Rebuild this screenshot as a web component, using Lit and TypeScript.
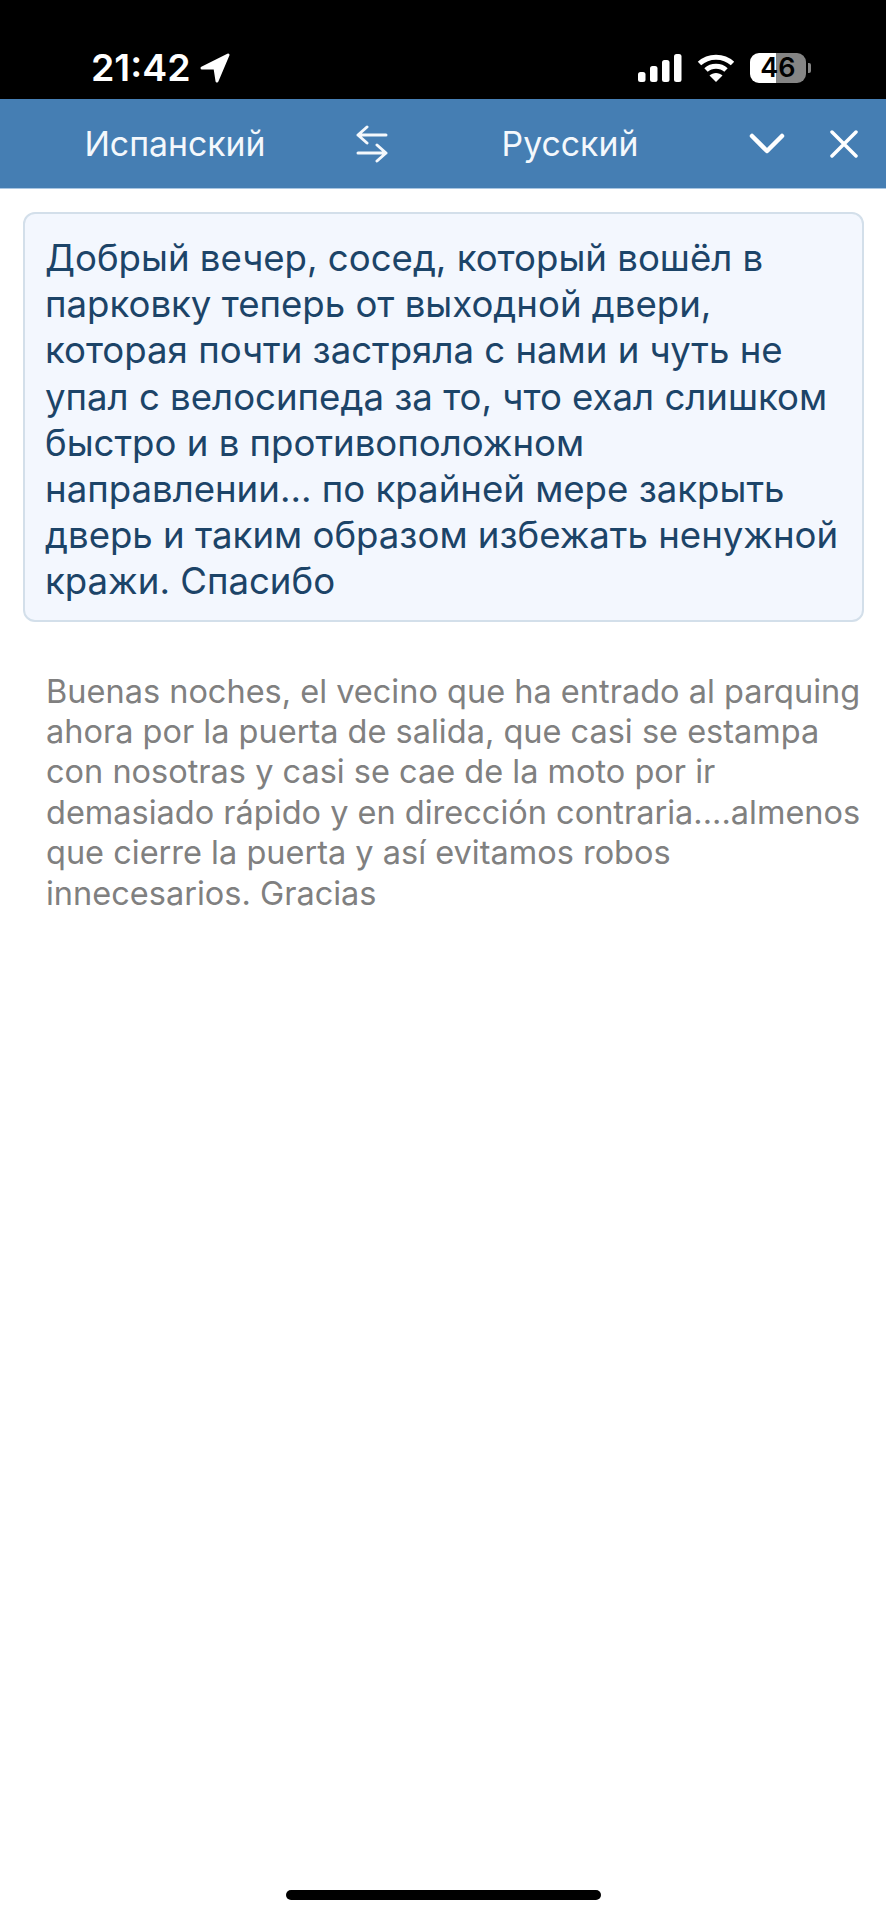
import { LitElement, html, css } from 'lit';
import { customElement } from 'lit/decorators.js';

const RU_LINES = [
  'Добрый вечер, сосед, который вошёл в',
  'парковку теперь от выходной двери,',
  'которая почти застряла с нами и чуть не',
  'упал с велосипеда за то, что ехал слишком',
  'быстро и в противоположном',
  'направлении... по крайней мере закрыть',
  'дверь и таким образом избежать ненужной',
  'кражи. Спасибо',
];

const ES_LINES = [
  'Buenas noches, el vecino que ha entrado al parquing',
  'ahora por la puerta de salida, que casi se estampa',
  'con nosotras y casi se cae de la moto por ir',
  'demasiado rápido y en dirección contraria....almenos',
  'que cierre la puerta y así evitamos robos',
  'innecesarios. Gracias',
];

@customElement('app-root')
export class AppRoot extends LitElement {
  static styles = css`
    :host {
      display: block;
      font-family: Inter, "Liberation Sans", sans-serif;
    }
    .page {
      display: flex;
      flex-direction: column;
      height: 1920px;
      background: #fff;
      overflow: hidden;
    }
    .status {
      display: flex;
      align-items: flex-start;
      justify-content: space-between;
      height: 99px;
      box-sizing: border-box;
      padding: 46px 75px 0 91px;
      background: #000;
      color: #fff;
    }
    .clock {
      display: flex;
      align-items: center;
      gap: 9px;
      font-size: 37.5px;
      line-height: 44px;
      font-weight: 600;
    }
    .indicators {
      display: flex;
      align-items: center;
      gap: 15px;
      height: 44px;
    }
    .battery {
      display: flex;
      align-items: center;
      gap: 2px;
    }
    .battery-body {
      width: 56px;
      height: 30px;
      border-radius: 9px;
      background: linear-gradient(90deg, #fff 0 47%, #858585 47% 100%);
      color: #000;
      font-size: 27px;
      line-height: 30px;
      font-weight: 600;
      text-align: center;
    }
    .battery-cap {
      width: 3px;
      height: 10px;
      border-radius: 0 2px 2px 0;
      background: #858585;
    }
    .bar {
      display: flex;
      align-items: center;
      height: 90px;
      box-sizing: border-box;
      background: #457eb3;
      border-bottom: 1px solid #a9c6e2;
      color: #f4f8fc;
      font-size: 33.8px;
      font-weight: 400;
    }
    .lang {
      flex: none;
      text-align: center;
    }
    .lang-from { width: 350px; }
    .lang-to { width: 212px; margin-left: 92px; }
    .swap { margin-left: 22px; width: 0; display: flex; justify-content: center; }
    svg { display: block; flex: none; }
    .chevron { margin-left: 73px; }
    .close { margin-left: 45px; }
    .content {
      display: flex;
      flex-direction: column;
      padding: 23px 22px 0 23px;
    }
    .source {
      padding: 21px 20px 15px 20px;
      border: 2px solid #d3dfea;
      border-radius: 12px;
      background: #f3f7fe;
      color: #1c4468;
      font-size: 36.6px;
      line-height: 46.2px;
    }
    .original {
      padding: 50px 0 0 23px;
      color: #808080;
      font-size: 32.5px;
      line-height: 40.4px;
    }
    .line { white-space: nowrap; }
    .home {
      display: flex;
      justify-content: center;
      margin-top: auto;
      padding-bottom: 20px;
    }
    .home-bar {
      width: 315px;
      height: 10px;
      border-radius: 5px;
      background: #000;
    }
  `;

  render() {
    return html`
      <div class="page">
        <div class="status">
          <div class="clock">
            21:42
            <svg width="30" height="30" viewBox="0 0 30 30">
              <path fill="#fff" stroke="#fff" stroke-width="3" stroke-linejoin="round"
                d="M2 15 L28 2 L17 28 L15 15 Z"/>
            </svg>
          </div>
          <div class="indicators">
            <svg width="44" height="28" viewBox="0 0 44 28" fill="#fff">
              <rect x="0" y="18" width="7.5" height="10" rx="2.5"/>
              <rect x="12" y="12" width="7.5" height="16" rx="2.5"/>
              <rect x="24" y="6" width="7.5" height="22" rx="2.5"/>
              <rect x="36" y="0" width="7.5" height="28" rx="2.5"/>
            </svg>
            <svg width="38" height="28" viewBox="0 0 38 28">
              <path fill="none" stroke="#fff" stroke-width="5" d="M2.5 9.5 C11.5 1 26.5 1 35.5 9.5"/>
              <path fill="none" stroke="#fff" stroke-width="5" d="M9 16 C14.5 11 23.5 11 29 16"/>
              <path fill="#fff" d="M12.5 21.5 C16 18 22 18 25.500 21.500 L19 28 Z"/>
            </svg>
            <div class="battery">
              <div class="battery-body">46</div>
              <div class="battery-cap"></div>
            </div>
          </div>
        </div>
        <div class="bar">
          <div class="lang lang-from">Испанский</div>
          <div class="swap">
            <svg width="32" height="38" viewBox="0 0 32 38" fill="none" stroke="#f4f8fc"
              stroke-width="3" stroke-linecap="round" stroke-linejoin="round">
              <path d="M30 10 H2 M11 2 L2 10 L11 18"/>
              <path d="M2 28 H30 M21 20 L30 28 L21 36"/>
            </svg>
          </div>
          <div class="lang lang-to">Русский</div>
          <svg class="chevron" width="36" height="24" viewBox="0 0 36 24" fill="none" stroke="#fff"
            stroke-width="4.500" stroke-linecap="round" stroke-linejoin="round">
            <path d="M3 4 L18 19 L33 4"/>
          </svg>
          <svg class="close" width="28" height="28" viewBox="0 0 28 28" fill="none" stroke="#fff"
            stroke-width="3.500" stroke-linecap="round">
            <path d="M2 2 L26 26 M26 2 L2 26"/>
          </svg>
        </div>
        <div class="content">
          <div class="source">
            ${RU_LINES.map(l => html`<div class="line">${l}</div>`)}
          </div>
          <div class="original">
            ${ES_LINES.map(l => html`<div class="line">${l}</div>`)}
          </div>
        </div>
        <div class="home"><div class="home-bar"></div></div>
      </div>
    `;
  }
}

declare global {
  interface HTMLElementTagNameMap {
    'app-root': AppRoot;
  }
}
